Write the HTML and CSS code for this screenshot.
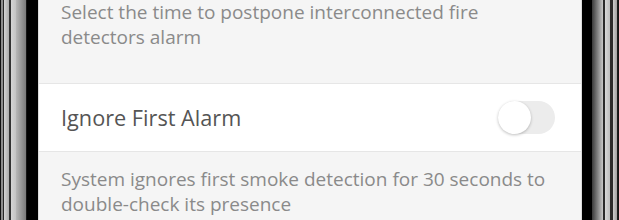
FILE: index.html
```html
<!DOCTYPE html>
<html>
<head>
<meta charset="utf-8">
<link rel="stylesheet" href="styles.css">
</head>
<body>
<div class="device">
  <div class="bezel bezel-left"></div>
  <div class="screen">
    <div class="note note-top">
      <p class="note-text">Select the time to postpone interconnected fire detectors alarm</p>
    </div>
    <div class="row">
      <span class="row-label">Ignore First Alarm</span>
      <span class="toggle"><span class="knob"></span></span>
    </div>
    <div class="note note-bottom">
      <p class="note-text">System ignores first smoke detection for 30 seconds to double-check its presence</p>
    </div>
  </div>
  <div class="bezel bezel-right"></div>
</div>
</body>
</html>
```

FILE: styles.css
```css
html, body {
  margin: 0;
  padding: 0;
  background: #ffffff;
}
body {
  font-family: "Open Sans", "Noto Sans", sans-serif;
  width: 619px;
  height: 220px;
  overflow: hidden;
}
.device {
  display: flex;
  height: 220px;
}
.bezel {
  flex: none;
  height: 100%;
}
.bezel-left {
  width: 39px;
  background: linear-gradient(to right,
    #111 0px, #111 1px,
    #8c8c8c 1px, #8c8c8c 3.3px,
    #262626 3.3px, #262626 4.3px,
    #d2d2d2 4.3px, #a8a8a8 9.3px,
    #333 9.3px, #333 11px,
    #d6d6d6 11px, #c4c4c4 16px,
    #b8b8b8 16px, #7a7a7a 26px,
    #2a2a2a 26px, #000 27px,
    #000 37.7px,
    #cfcfcf 37.7px, #e6e6e6 39px);
}
.bezel-right {
  width: 38px;
  background: linear-gradient(to right,
    #dcdcdc 0px, #dcdcdc 1px,
    #000 1px, #000 11px,
    #3a3a3a 11px, #c8c8c8 22px,
    #2a2a2a 22px, #2a2a2a 24px,
    #d8d8d8 24px, #bcbcbc 29px,
    #2c2c2c 29px, #2c2c2c 32px,
    #cfcfcf 32px, #a0a0a0 36px,
    #222 36px, #111 38px);
}
.screen {
  flex: none;
  width: 542px;
  height: 100%;
  background: #f5f5f5;
  display: flex;
  flex-direction: column;
}
.note {
  background: #f5f5f5;
  padding: 0 34px 0 22px;
}
.note-top {
  height: 83px;
  box-sizing: border-box;
  padding-top: 0;
}
.note-bottom {
  padding-top: 15px;
}
.note-text {
  margin: 0;
  font-size: 19px;
  line-height: 25px;
  color: #8a8a8a;
}
.row {
  height: 69px;
  box-sizing: border-box;
  background: #ffffff;
  border-top: 1px solid #e6e6e6;
  border-bottom: 1px solid #e6e6e6;
  display: flex;
  align-items: center;
  justify-content: space-between;
  padding: 0 26px 0 22px;
}
.row-label {
  font-size: 21.7px;
  color: #555555;
}
.toggle {
  width: 57px;
  height: 33px;
  border-radius: 17px;
  background: #ececec;
  position: relative;
  flex: none;
}
.knob {
  position: absolute;
  left: 0;
  top: 0;
  width: 33px;
  height: 33px;
  border-radius: 50%;
  background: #ffffff;
  box-shadow: 0 1px 3px rgba(0, 0, 0, 0.25);
}
```
